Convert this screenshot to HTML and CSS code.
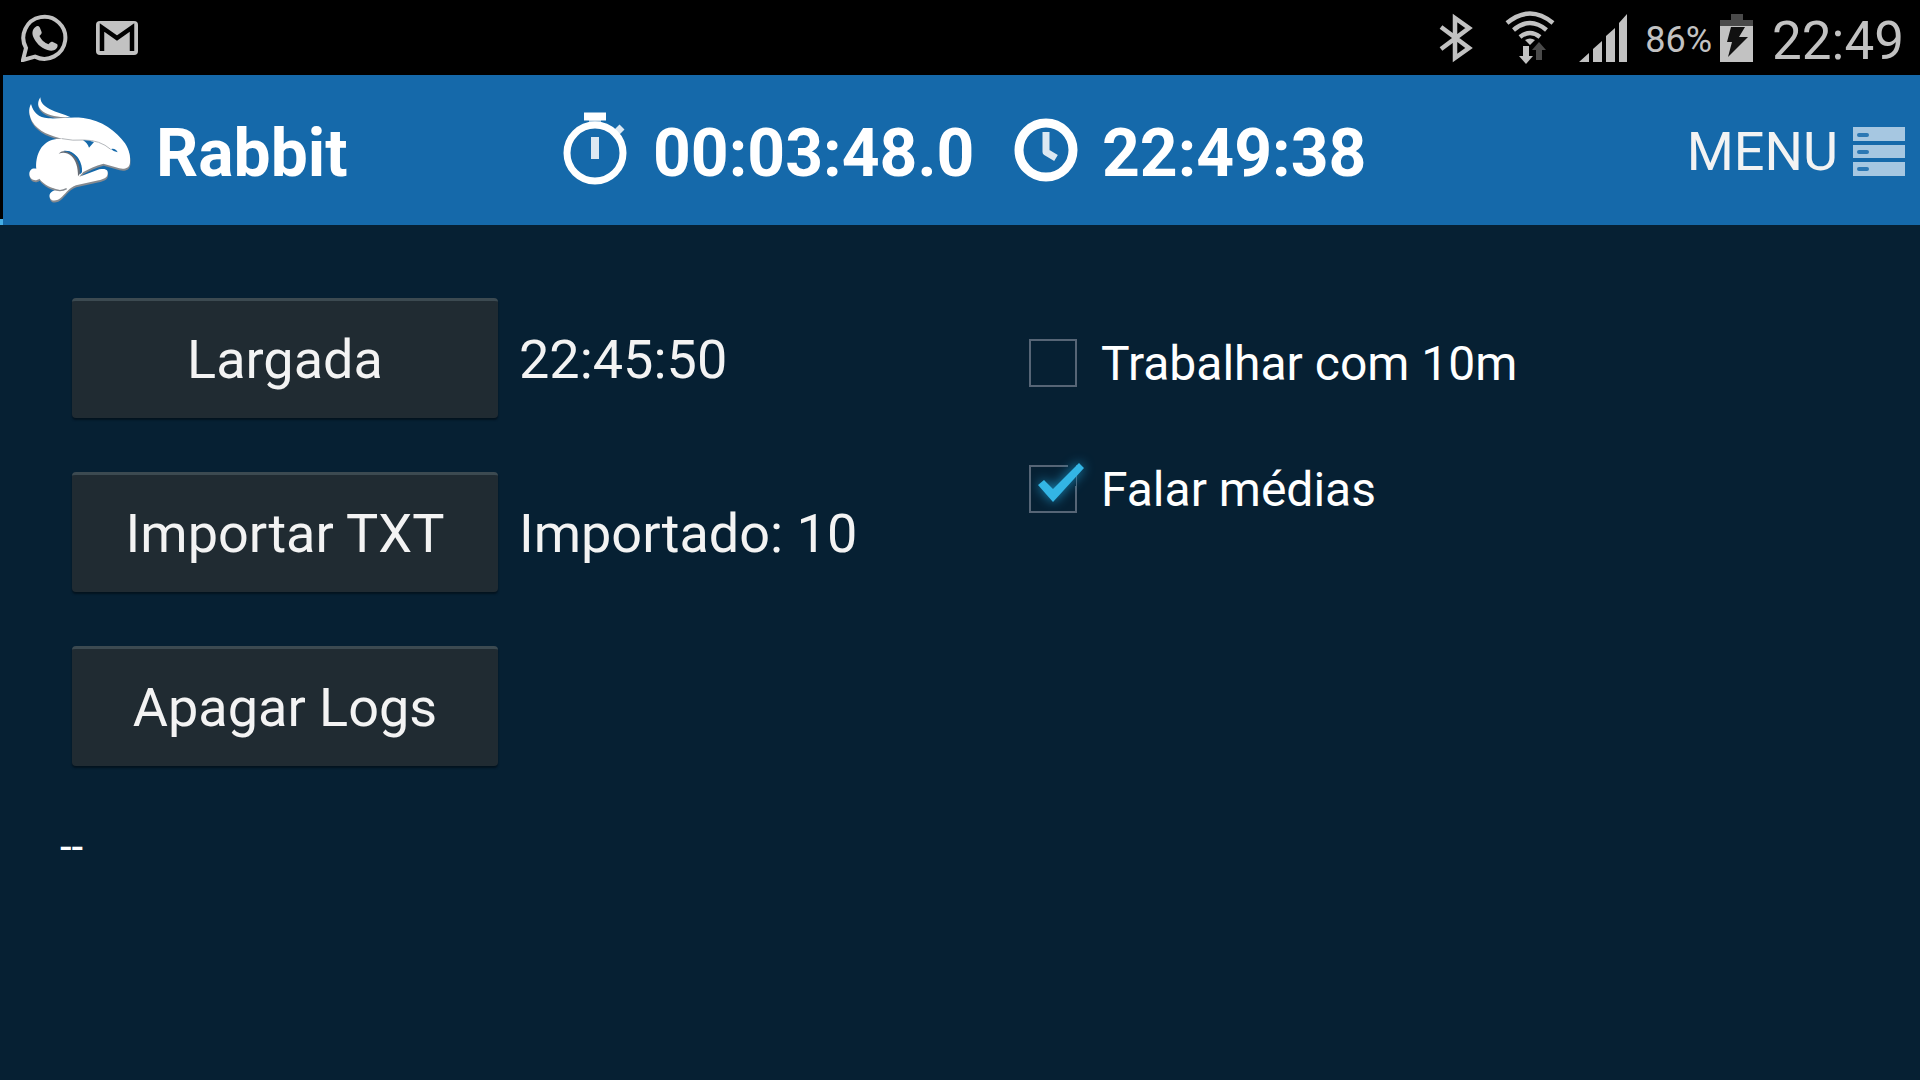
FILE: index.html
```html
<!DOCTYPE html>
<html lang="pt">
<head>
<meta charset="utf-8">
<title>Rabbit</title>
<link rel="stylesheet" href="styles.css">
</head>
<body>
<div class="status">
  <div class="status-group notifications">
    <svg width="48" height="48" viewBox="0 0 48 48" fill="none" aria-label="WhatsApp">
      <path d="M2 46 5 34A21 21 0 1 1 14 42.600Z" fill="none" stroke="#c2c2c2" stroke-width="4"/>
      <path d="M14.500 13c1.500-1.500 3.500-1.200 4.500 1l1.600 4c.4 1-.2 2-2.200 4 2.500 4.500 5 6.500 9 8.300 1.800-2.300 2.800-3 4-2.500l4.500 2.200c1.300.7.800 3.500-.9 5-2 1.800-5 2.300-8.500 1C19 33.500 14.800 28.500 12.300 23c-1.800-4.500-.5-8 2.200-10Z" fill="#c2c2c2"/>
    </svg>
    <svg width="42" height="34" viewBox="0 0 42 34" aria-label="Gmail">
      <rect width="42" height="34" rx="4" fill="#c2c2c2"/>
      <path d="M6 30V6.500L21 17 36 6.500V30" fill="none" stroke="#000" stroke-width="4.500"/>
    </svg>
  </div>
  <div class="status-group">
    <svg class="bluetooth" width="34" height="50" viewBox="0 0 34 50" fill="none" stroke="#c2c2c2" stroke-width="4.500">
      <path d="M2 14 30 35 16 45V5L30 15 2 36"/>
    </svg>
    <svg class="wifi" width="50" height="54" viewBox="0 0 50 54" fill="none" stroke="#c2c2c2" stroke-width="4.500">
      <path d="M2 12Q25-7 48 12M8.500 19Q25 5 41.500 19M15 26Q25 18 35 26"/>
      <path d="M20 29Q25 26 30 29L25 34Z" fill="#c2c2c2" stroke="none"/>
      <path d="M18 35h6v10h4l-7 8-7-8h4Z" fill="#c2c2c2" stroke="none"/>
      <path d="M34 31l7 8h-4v10h-6V39h-4Z" fill="#4a4a4a" stroke="none"/>
    </svg>
    <svg class="signal" width="48" height="48" viewBox="0 0 48 48" fill="#c2c2c2">
      <path d="M0 48 10 39v9ZM14 35l9-8v21h-9ZM27 22l9-8v34h-9ZM40 9l8-9v48h-8Z"/>
    </svg>
    <span class="percent">86%</span>
    <svg class="battery" width="33" height="48" viewBox="0 0 33 48">
      <path d="M0 12V6h11V0h12v6h10v6Z" fill="#4a4a4a"/>
      <path d="M0 12h33v36H0Z" fill="#c2c2c2"/>
      <path d="M11 13h14l-6 10h9L8 43l4-15H7Z" fill="#111"/>
    </svg>
    <span class="clock">22:49</span>
  </div>
</div>
<header class="bar">
  <div class="brand">
    <svg width="104" height="108" viewBox="24 18 312 324" aria-hidden="true">
      <defs>
        <g id="rabbit">
          <path d="M61 22C62 40 72 48 90 58C110 68 130 72 152 82C125 82 98 80 76 69C55 58 48 42 61 22Z"/>
          <path d="M33 42C40 68 55 82 85 85C120 87 150 80 190 84C245 90 290 125 315 160C328 180 332 200 330 218C328 236 312 238 298 235L250 221C225 227 208 236 190 246L178 260 238 238C258 234 267 240 262 256C258 266 248 268 236 271L168 286C148 293 140 308 126 320C112 333 98 335 91 326C84 315 92 303 108 300L120 299C92 295 72 284 58 266C46 276 28 268 28 252C28 238 38 233 49 236C46 200 60 160 98 149C110 146 122 146 134 147C90 138 55 124 37 95C27 77 24 58 33 42Z"/>
        </g>
      </defs>
      <use href="#rabbit" x="1" y="6" fill="#858a90"/>
      <use href="#rabbit" fill="#fff"/>
      <path d="M126 146Q158 153 192 150Q240 150 272 178" fill="none" stroke="#b4b8bc" stroke-width="3"/>
      <path d="M189 151Q205 150 222 156L207 173Q203 160 189 151Z" fill="#1569aa"/>
      <path d="M273 177Q287 174 293 187Q283 187 273 177Z" fill="#1569aa"/>
      <path d="M116 191C128 179 148 182 162 193C178 206 184 224 183 247L174 259C174 232 168 211 154 198C142 188 130 186 116 191Z" fill="#666c75"/>
      <path d="M130 183C150 180 166 192 175 205C184 219 187 232 186 247L180 253C181 229 173 207 158 195C149 188 140 185 130 183Z" fill="#1569aa"/>
      <path d="M98 297Q122 307 140 296" fill="none" stroke="#858a90" stroke-width="4"/>
    </svg>
    <h1 class="strong">Rabbit</h1>
  </div>
  <div class="timer">
    <svg class="stopwatch" width="66" height="74" viewBox="0 0 66 74" fill="none" stroke="#fff">
      <circle cx="32" cy="41" r="28" stroke-width="7"/>
      <path d="M21 4.500h22" stroke-width="8"/><path d="M32 8v6" stroke-width="12" opacity=".6"/>
      <path d="M32 25v22" stroke-width="8" opacity=".85"/><path d="M51 23l8-8" stroke-width="7" opacity=".85"/>
    </svg>
    <span class="strong">00:03:48.0</span>
  </div>
  <div class="time">
    <svg width="64" height="64" viewBox="0 0 64 64" fill="none" stroke="#fff">
      <circle cx="32" cy="32" r="27" stroke-width="9"/>
      <path d="M32 14v20l10 6" stroke-width="7" stroke-linejoin="round" opacity=".85"/>
    </svg>
    <span class="strong">22:49:38</span>
  </div>
  <button class="menu" type="button">MENU
    <svg width="52" height="50" viewBox="0 0 52 50">
      <path d="M0 0h52v14H0ZM0 18h52v13H0ZM0 35h52v14H0Z" fill="#a6c7e1"/>
      <path d="M6 8h8M6 25h8M6 42h8" stroke="#2c78b4" stroke-width="4" stroke-linecap="round"/>
    </svg>
  </button>
</header>
<main class="content">
  <section class="actions">
    <div class="row"><button class="action" type="button">Largada</button><span class="value">22:45:50</span></div>
    <div class="row"><button class="action" type="button">Importar TXT</button><span class="value">Importado: 10</span></div>
    <div class="row"><button class="action" type="button">Apagar Logs</button></div>
    <p class="log">--</p>
  </section>
  <section class="options">
    <label class="option"><input class="check" type="checkbox">Trabalhar com 10m</label>
    <label class="option"><input class="check" type="checkbox" checked>Falar médias
      <svg class="tick" width="68" height="68" viewBox="0 0 68 68" aria-hidden="true">
        <path d="M47 10h8v24h-8Z" fill="#062033"/>
        <path class="tick-mark" d="M17 33l6-5 9 9L58 11l5 5L32 50Z" fill="#33b5e5"/>
      </svg>
    </label>
  </section>
</main>
</body>
</html>
```
FILE: styles.css
```css
* { box-sizing: border-box; }
body {
  margin: 0;
  min-height: 100vh;
  background: #062033;
  color: #f3f3f3;
  font-family: Roboto, sans-serif;
  font-size: 54px;
  line-height: 64px;
}
h1, p { margin: 0; }
svg { display: block; flex: none; }
button {
  border: 0;
  padding: 0;
  color: inherit;
  font: inherit;
}
.status {
  display: flex;
  justify-content: space-between;
  height: 75px;
  padding: 0 16px 0 21px;
  background: #000;
  color: #c2c2c2;
}
.status-group { display: flex; align-items: center; }
.notifications { gap: 27px; }
.bluetooth { margin-right: 32px; }
.wifi { margin-right: 24px; }
.signal { margin-right: 18px; }
.percent { font-size: 36px; margin-right: 8px; padding-top: 4px; }
.battery { margin-right: 19px; }
.clock { font-size: 53px; padding-top: 6px; }
.bar {
  display: grid;
  grid-template-columns: 535px 451px 1fr auto;
  align-items: center;
  height: 150px;
  padding: 0 15px 0 28px;
  background: linear-gradient(#000 144px, #45aee6 144px) left / 3px 100% no-repeat, #1569aa;
}
.brand, .timer, .time { display: flex; align-items: center; gap: 24px; }
.stopwatch { margin-bottom: 3px; }
.strong {
  color: #fff;
  font-size: 66px;
  font-weight: 700;
  line-height: 78px;
  padding-top: 8px;
}
.menu {
  display: flex;
  align-items: center;
  gap: 15px;
  padding-top: 4px;
  background: none;
}
.content {
  display: grid;
  grid-template-columns: 1fr 932px;
  padding-top: 73px;
}
.actions { display: grid; gap: 54px; padding-left: 72px; }
.row { display: flex; align-items: center; gap: 21px; }
.value { padding-top: 4px; }
.action {
  width: 426px;
  height: 120px;
  border-top: 3px solid #3c4a51;
  border-radius: 4px;
  background: #202b32;
  box-shadow: 0 2px 2px #03131f;
}
.log {
  margin: -5px 0 0 -12px;
  color: #fff;
  font-size: 42px;
}
.options { display: grid; align-content: start; gap: 62px; padding-top: 34px; }
.option {
  position: relative;
  display: flex;
  align-items: center;
  gap: 24px;
  padding-left: 41px;
  color: #fff;
  font-size: 48px;
}
.check {
  appearance: none;
  width: 48px;
  height: 48px;
  margin: 0 0 2px;
  border: 2px solid #566576;
}
.tick {
  position: absolute;
  left: 33px;
  top: -6px;
  overflow: visible;
}
.tick-mark { filter: drop-shadow(0 0 6px #1b8fc0); }
```
